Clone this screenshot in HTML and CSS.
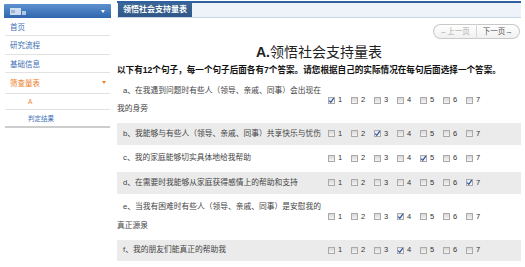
FILE: index.html
```html
<!DOCTYPE html>
<html lang="zh-CN">
<head>
    <meta charset="UTF-8">
    <title>领悟社会支持量表</title>
    <link rel="stylesheet" href="styles.css">
</head>
<body>
    <div class="page">
        <div class="sidebar">
            <div class="side-head">
                <svg class="logo" width="16" height="7" viewBox="0 0 16 7">
                    <rect x="0" y="0" width="11" height="7" fill="#e6eef8" opacity="0.85"/>
                    <rect x="1" y="2" width="4" height="3" fill="#9fb6d4"/>
                    <rect x="12" y="3" width="4" height="4" fill="#cfdcec" opacity="0.8"/>
                </svg>
                <span class="caret caret-white"></span>
            </div>
            <ul class="menu">
                <li class="item">首页</li>
                <li class="item">研究流程</li>
                <li class="item">基础信息</li>
                <li class="item item-open">筛查量表<span class="caret caret-orange"></span></li>
                <li class="sub sub-active">A</li>
                <li class="sub">判定结果</li>
            </ul>
        </div>

        <div class="main">
            <div class="tabbar">
                <span class="tab">领悟社会支持量表</span>
            </div>

            <div class="pager">
                <span class="pbtn pbtn-off">←上一页</span>
                <span class="pbtn">下一页→</span>
            </div>

            <h1 class="title"><span class="title-a">A.</span>领悟社会支持量表</h1>
            <p class="intro">以下有12个句子，每一个句子后面各有7个答案。请您根据自己的实际情况在每句后面选择一个答案。</p>

            <div class="questions" id="questions"></div>
        </div>
    </div>

    <script>
        var questions = [
            { text: "a、在我遇到问题时有些人（领导、亲戚、同事）会出现在我的身旁", pick: 1 },
            { text: "b、我能够与有些人（领导、亲戚、同事）共享快乐与忧伤", pick: 3 },
            { text: "c、我的家庭能够切实具体地给我帮助", pick: 5 },
            { text: "d、在需要时我能够从家庭获得感情上的帮助和支持", pick: 7 },
            { text: "e、当我有困难时有些人（领导、亲戚、同事）是安慰我的真正源泉", pick: 4 },
            { text: "f、我的朋友们能真正的帮助我", pick: 4 }
        ];

        var check = '<svg width="7" height="7" viewBox="0 0 7 7"><path d="M1.2 3.6 L2.8 5.3 L5.8 1.2" fill="none" stroke="#2b4fa0" stroke-width="1.2"/></svg>';
        var html = "";
        for (var i = 0; i < questions.length; i++) {
            var q = questions[i];
            html += '<div class="row' + (i % 2 == 1 ? ' row-gray' : '') + '">';
            html += '<div class="q">' + q.text + '</div><div class="opts">';
            for (var n = 1; n <= 7; n++) {
                html += '<span class="opt"><span class="box' + (n == q.pick ? ' box-on' : '') + '">' + (n == q.pick ? check : '') + '</span><span class="num">' + n + '</span></span>';
            }
            html += '</div></div>';
        }
        document.getElementById("questions").innerHTML = html;
    </script>
</body>
</html>
```

FILE: styles.css
```css
:root {
    --blue: #3d6fb4;
    --orange: #f0802a;
    --line: #e2e2e2;
    --gray-row: #ebebeb;
}

* {
    box-sizing: border-box;
    margin: 0;
    padding: 0;
}

body {
    background: #fff;
    color: #333;
    font-family: "Liberation Sans", "Noto Sans CJK SC", sans-serif;
    width: 525px;
    height: 267px;
    overflow: hidden;
}

.page {
    display: flex;
    align-items: flex-start;
}

/* sidebar */
.sidebar {
    width: 107px;
    margin: 4px 0 0 4px;
}

.side-head {
    height: 14px;
    background: linear-gradient(#5d91d0, #2f66ad);
    border-radius: 1px 1px 0 0;
    display: flex;
    align-items: center;
    justify-content: space-between;
    padding: 0 6px 0 6px;
}

.caret {
    width: 0;
    height: 0;
    border-left: 2.5px solid transparent;
    border-right: 2.5px solid transparent;
}

.caret-white {
    border-top: 3px solid #fff;
}

.caret-orange {
    border-top: 3px solid var(--orange);
    margin-right: 4px;
}

.menu {
    list-style: none;
    border-bottom: 2px solid #cdcdcd;
    margin: 0 1px;
}

.item, .sub {
    display: flex;
    align-items: center;
    justify-content: space-between;
    border-bottom: 1px solid var(--line);
    color: var(--blue);
}

.item {
    height: 18.3px;
    padding-left: 5px;
    font-size: 7.5px;
}

.item-open {
    height: 21px;
    color: var(--orange);
}

.sub {
    height: 16px;
    padding-left: 23px;
    font-size: 6.5px;
}

.sub-active {
    color: var(--orange);
}

.sub:last-child {
    border-bottom: none;
}

/* main */
.main {
    width: 404px;
    margin-left: 6px;
}

.tabbar {
    margin-top: 1px;
    height: 17px;
    border-top: 2px solid #2e5f9f;
    border-bottom: 1px solid #c9d6e5;
    background: #eef3f9;
    padding-left: 1px;
    display: flex;
}

.tab {
    background: linear-gradient(#3f6795, #2f5789);
    color: #fff;
    font-size: 8px;
    font-weight: bold;
    line-height: 14px;
    padding: 0 5px;
    width: 74px;
    white-space: nowrap;
}

.pager {
    display: flex;
    justify-content: flex-end;
    margin: 6px 1px 0 0;
}

.pbtn {
    height: 15px;
    width: 43.5px;
    line-height: 13px;
    text-align: center;
    font-size: 7.5px;
    color: #555;
    border: 1px solid #c9c9c9;
    background: linear-gradient(#ffffff, #f0f0f0);
}

.pbtn-off {
    color: #aaa;
    border-radius: 8px 0 0 8px;
    border-right: 1px solid #d6d6d6;
}

.pbtn:last-child {
    border-radius: 0 8px 8px 0;
    border-left: none;
}

.title {
    margin-top: 5px;
    text-align: center;
    font-size: 14px;
    line-height: 16px;
    font-weight: normal;
    color: #222;
}

.title-a {
    font-weight: bold;
}

.intro {
    margin-top: 3px;
    font-size: 8.6px;
    line-height: 14px;
    font-weight: bold;
    color: #111;
    white-space: nowrap;
}

.questions {
    display: flex;
    flex-direction: column;
    gap: 3px;
    margin-top: 3px;
}

.row {
    display: flex;
    align-items: center;
}

.row-gray {
    background: var(--gray-row);
}

.q {
    width: 211px;
    flex: none;
    padding: 1.5px 6px 1.5px 0;
    font-size: 7.75px;
    line-height: 18.5px;
    text-indent: 6px;
    color: #444;
}

.opts {
    display: flex;
}

.opt {
    width: 23px;
    display: flex;
    align-items: center;
}

.box {
    width: 7px;
    height: 7px;
    border: 1px solid #aaa;
    background: linear-gradient(#d8d8d8, #f4f4f4);
    display: flex;
    align-items: center;
    justify-content: center;
}

.box svg {
    flex: none;
}

.box-on {
    background: linear-gradient(#e4e8f0, #fafafa);
}

.num {
    margin-left: 3px;
    font-size: 7.5px;
    line-height: 8px;
    color: #333;
}
```
